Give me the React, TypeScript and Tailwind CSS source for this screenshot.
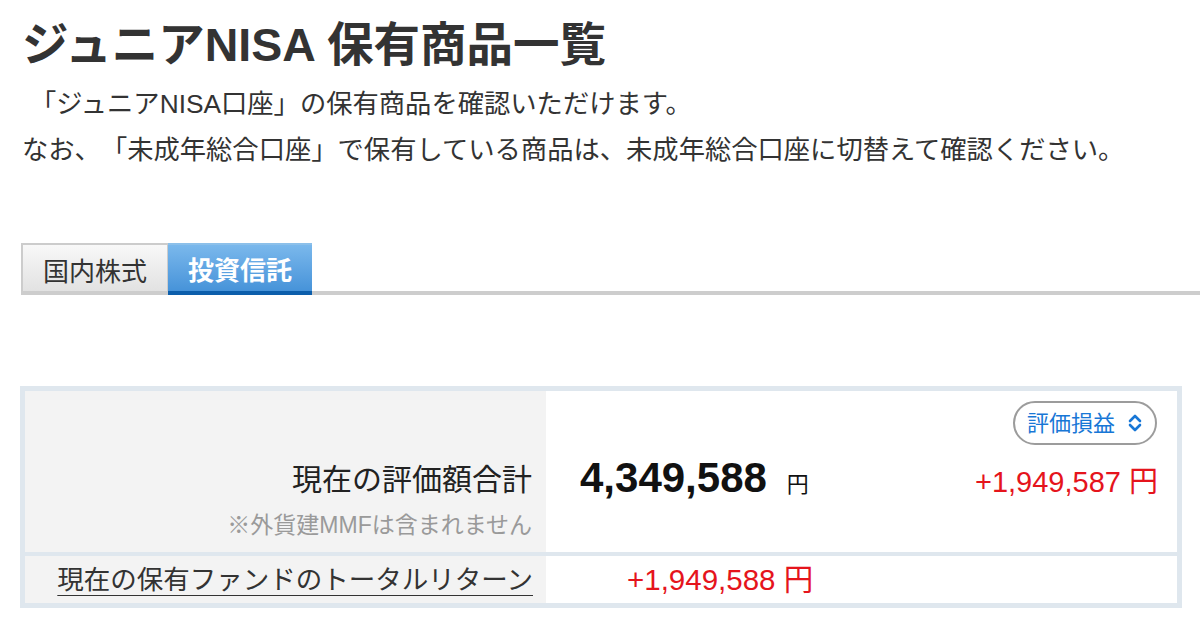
const font = { fontFamily: '"Liberation Sans", "Noto Sans CJK JP", sans-serif' };

function UpDownIcon() {
  return (
    <svg width="16" height="18" viewBox="0 0 16 18" fill="none" stroke="currentColor" strokeWidth="2.6" strokeLinecap="round" strokeLinejoin="round">
      <path d="M3 7 L8 2 L13 7" />
      <path d="M3 11 L8 16 L13 11" />
    </svg>
  );
}

export default function App() {
  return (
    <div className="w-[1200px] h-[617px] bg-white overflow-hidden text-[#333] [text-spacing-trim:space-all]" style={font}>
      <div className="pl-[22px] pt-[18px]">
        <h1 className="text-[46.5px] leading-[55px] font-bold text-[#333]">ジュニアNISA 保有商品一覧</h1>
        <div className="mt-[8px] text-[26.3px] leading-[46px]">
          <p className="pl-[8px]">「ジュニアNISA口座」の保有商品を確認いただけます。</p>
          <p>なお、「未成年総合口座」で保有している商品は、未成年総合口座に切替えて確認ください。</p>
        </div>
      </div>

      <div className="mt-[70px] ml-[21px] flex border-b-[4px] border-[#cdcdcd]">
        <div className="w-[147px] h-[48px] flex items-center justify-center pt-[8px] border-t-2 border-l-2 border-r border-[#cccccc] bg-gradient-to-b from-[#f8f8f8] to-[#e2e2e2] text-[26px] text-[#333]">
          国内株式
        </div>
        <div className="w-[144px] h-[52px] -mb-[4px] flex items-center justify-center pt-[6px] border-t-2 border-[#8cc0ea] border-b-[4px] border-b-[#0c5eab] bg-gradient-to-b from-[#7ab8ec] to-[#4693d9] text-[26px] font-bold text-white">
          投資信託
        </div>
      </div>

      <div className="mt-[91px] ml-[20px] w-[1162px] p-[5px] bg-[#dfe7ee] flex flex-col gap-[4px]">
        <div className="h-[161px] flex">
          <div className="w-[521px] bg-[#f3f3f3] flex flex-col items-end justify-end pr-[14px] pb-[12px]">
            <div className="text-[30px] leading-[36px] text-[#222]">現在の評価額合計</div>
            <div className="mt-[12px] text-[23px] leading-[30px] text-[#9a9a9a]">※外貨建MMFは含まれません</div>
          </div>
          <div className="flex-1 bg-white flex flex-col">
            <div className="flex justify-end pt-[10px] pr-[20px]">
              <button className="h-[44px] w-[144px] rounded-full border-2 border-[#9c9c9c] bg-white flex items-center justify-center gap-[12px] text-[22px] text-[#1877d6]">
                <span>評価損益</span>
                <UpDownIcon />
              </button>
            </div>
            <div className="mt-[13px] flex items-baseline pl-[34px] pr-[19px]">
              <span className="text-[42px] leading-[40px] font-bold text-[#111]">4,349,588</span>
              <span className="ml-[20px] text-[22px] text-[#111]">円</span>
              <span className="flex-1" />
              <span className="text-[29px] text-[#e5141c]">+1,949,587 円</span>
            </div>
          </div>
        </div>
        <div className="h-[47px] flex">
          <div className="w-[521px] bg-[#f3f3f3] flex items-center justify-end pr-[13px]">
            <span className="text-[26.5px] leading-[32px] text-[#333] underline decoration-1 underline-offset-[6px] cursor-pointer">現在の保有ファンドのトータルリターン</span>
          </div>
          <div className="flex-1 bg-white flex items-center pl-[81px]">
            <span className="text-[29.5px] leading-[32px] text-[#e5141c]">+1,949,588 円</span>
          </div>
        </div>
      </div>
    </div>
  );
}
